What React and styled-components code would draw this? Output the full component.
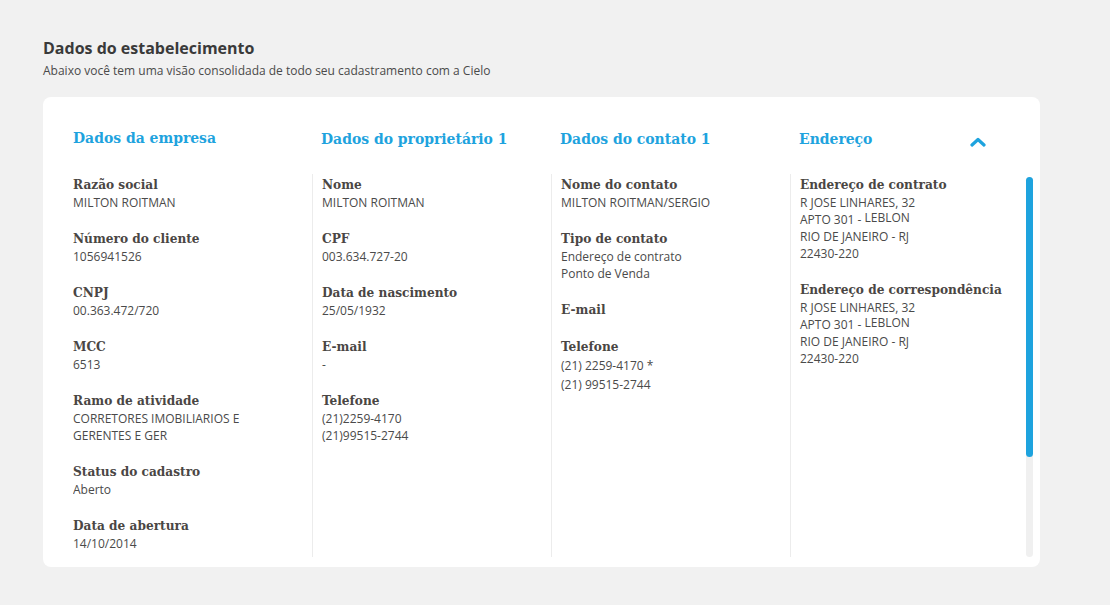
import React from "react";
import styled, { createGlobalStyle } from "styled-components";

const GlobalStyle = createGlobalStyle`
  html, body {
    margin: 0;
    background: #f1f1f1;
  }
  body {
    font-family: "Open Sans", "Lato", sans-serif;
    color: #4a4a4a;
  }
`;

const Page = styled.div`
  padding: 38px 0 0 43px;
`;

const Title = styled.h1`
  margin: 0;
  font-size: 16px;
  line-height: 20px;
  font-weight: 700;
  color: #3a3a3a;
`;

const Subtitle = styled.p`
  margin: 5px 0 0;
  font-size: 12px;
  line-height: 16px;
  color: #4a4a4a;
`;

const Card = styled.section`
  box-sizing: border-box;
  width: 997px;
  height: 470px;
  margin-top: 18px;
  padding: 32px 7px 10px 30px;
  background: #fff;
  border-radius: 8px;
  display: flex;
  flex-direction: column;
`;

const HeaderRow = styled.div`
  display: grid;
  grid-template-columns: repeat(4, 239px);
  margin-bottom: 23px;
`;

const HeadCell = styled.div`
  display: flex;
  align-items: center;
  justify-content: space-between;
  padding-left: ${(p) => (p.$first ? "0" : "9px")};
  padding-right: 43px;
  margin-top: ${(p) => (p.$first ? "-2px" : "0")};
`;

const Heading = styled.h2`
  margin: 0;
  font-family: "DejaVu Serif", serif;
  font-stretch: semi-condensed;
  font-size: 15.5px;
  line-height: 20px;
  font-weight: 700;
  color: #1ea3de;
`;

const Toggle = styled.button`
  border: 0;
  padding: 0;
  background: none;
  display: flex;
  margin-top: 6px;
  cursor: pointer;
`;

const Body = styled.div`
  flex: 1;
  display: flex;
  min-height: 0;
`;

const Columns = styled.div`
  flex: 1;
  display: grid;
  grid-template-columns: repeat(4, 239px);
  overflow: hidden;
`;

const Column = styled.div`
  padding-left: ${(p) => (p.$first ? "0" : "9px")};
  border-left: ${(p) => (p.$first ? "none" : "1px solid #ececec")};
  margin-top: 2px;
`;

const Field = styled.div`
  margin-bottom: 17px;
`;

const Label = styled.div`
  font-family: "DejaVu Serif", serif;
  font-stretch: semi-condensed;
  font-weight: 700;
  font-size: 13.5px;
  line-height: 20px;
  color: #4a4644;
`;

const Value = styled.div`
  font-size: 12px;
  line-height: ${(p) => (p.$loose ? "19px" : "17px")};
  color: #4a4a4a;
`;

const Raised = styled.span`
  position: relative;
  top: -2px;
`;

const Track = styled.div`
  width: 7px;
  margin-top: 5px;
  border-radius: 4px;
  background: #f0f0f0;
  display: flex;
  flex-direction: column;
`;

const Thumb = styled.div`
  height: 280px;
  border-radius: 4px;
  background: #1ea3de;
`;

const columns = [
  {
    title: "Dados da empresa",
    fields: [
      ["Razão social", ["MILTON ROITMAN"]],
      ["Número do cliente", ["1056941526"]],
      ["CNPJ", ["00.363.472/720"]],
      ["MCC", ["6513"]],
      ["Ramo de atividade", ["CORRETORES IMOBILIARIOS E", "GERENTES E GER"]],
      ["Status do cadastro", ["Aberto"]],
      ["Data de abertura", ["14/10/2014"]],
    ],
  },
  {
    title: "Dados do proprietário 1",
    fields: [
      ["Nome", ["MILTON ROITMAN"]],
      ["CPF", ["003.634.727-20"]],
      ["Data de nascimento", ["25/05/1932"]],
      ["E-mail", ["-"]],
      ["Telefone", ["(21)2259-4170", "(21)99515-2744"]],
    ],
  },
  {
    title: "Dados do contato 1",
    fields: [
      ["Nome do contato", ["MILTON ROITMAN/SERGIO"]],
      ["Tipo de contato", ["Endereço de contrato", "Ponto de Venda"]],
      ["E-mail", []],
      ["Telefone", ["(21) 2259-4170 *", "(21) 99515-2744"], "loose"],
    ],
  },
  {
    title: "Endereço",
    fields: [
      ["Endereço de contrato", "address"],
      ["Endereço de correspondência", "address"],
    ],
  },
];

function Address() {
  return (
    <>
      <Value>R JOSE LINHARES, 32</Value>
      <Value>
        APTO 301 - <Raised>LEBLON</Raised>
      </Value>
      <Value>RIO DE JANEIRO - RJ</Value>
      <Value>22430-220</Value>
    </>
  );
}

function ChevronUp() {
  return (
    <svg width="16" height="10" viewBox="0 0 16 10">
      <polyline
        points="2,8 8,2.5 14,8"
        fill="none"
        stroke="#1ea3de"
        strokeWidth="3.2"
        strokeLinecap="round"
        strokeLinejoin="round"
      />
    </svg>
  );
}

export default function App() {
  return (
    <Page>
      <GlobalStyle />
      <Title>Dados do estabelecimento</Title>
      <Subtitle>
        Abaixo você tem uma visão consolidada de todo seu cadastramento com a Cielo
      </Subtitle>
      <Card>
        <HeaderRow>
          {columns.map((col, i) => (
            <HeadCell key={col.title} $first={i === 0}>
              <Heading>{col.title}</Heading>
              {i === 3 && (
                <Toggle aria-label="Recolher">
                  <ChevronUp />
                </Toggle>
              )}
            </HeadCell>
          ))}
        </HeaderRow>
        <Body>
          <Columns>
            {columns.map((col, i) => (
              <Column key={col.title} $first={i === 0}>
                {col.fields.map(([label, values, mode]) => (
                  <Field key={label}>
                    <Label>{label}</Label>
                    {values === "address" ? (
                      <Address />
                    ) : (
                      values.map((v) => (
                        <Value key={v} $loose={mode === "loose"}>
                          {v}
                        </Value>
                      ))
                    )}
                  </Field>
                ))}
              </Column>
            ))}
          </Columns>
          <Track>
            <Thumb />
          </Track>
        </Body>
      </Card>
    </Page>
  );
}
